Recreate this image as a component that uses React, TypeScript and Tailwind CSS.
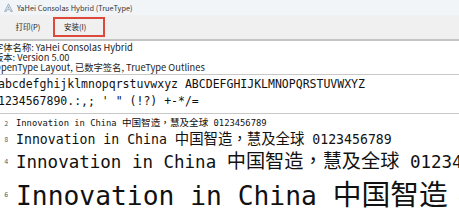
const mono = "font-['DejaVu_Sans_Mono','Liberation_Mono',monospace]";
const cjk = "font-['Noto_Sans_CJK_SC','Noto_Sans',sans-serif]";
const cjkTc = "font-['Noto_Sans_CJK_TC','Noto_Sans_CJK_SC',sans-serif]";

const samples = [
  { pt: "12", row: "h-[16px]", latin: "text-[8.8px]", han: "text-[9.6px]" },
  { pt: "18", row: "h-[16px]", latin: "text-[13.2px]", han: "text-[14.4px]" },
  { pt: "24", row: "h-[28px]", latin: "text-[17.5px]", han: "text-[19.2px]" },
  { pt: "36", row: "h-[38px]", latin: "text-[26.3px]", han: "text-[28.8px]" },
];

function FontIcon() {
  return (
    <svg width="9" height="9" viewBox="0 0 9 9" className="shrink-0">
      <path d="M4.5 0.8 L8.4 8.4 H6.6 L5.8 6.6 H3.2 L2.4 8.4 H0.6 Z" fill="#dbe4ee" stroke="#8a9bb0" strokeWidth="0.7" />
      <path d="M3.7 5.3 H5.3 L4.5 3.4 Z" fill="#8a9bb0" />
    </svg>
  );
}

export default function App() {
  return (
    <div className={`w-[459px] h-[213px] overflow-hidden bg-white text-[#111] ${cjk}`}>
      {/* Title bar */}
      <div className="h-[15px] bg-[#f2f5f8] flex items-center gap-[4px] pl-[4px]">
        <FontIcon />
        <span className="text-[7.4px] text-[#333] leading-none">YaHei Consolas Hybrid (TrueType)</span>
      </div>

      {/* Toolbar */}
      <div className="h-[26px] bg-[#f0f0f0] border-b-2 border-[#c4c4c4] flex items-center pl-[5px] gap-[2px]">
        <button className="w-[46px] h-[20px] text-[7.5px] text-[#222] text-center">打印(P)</button>
        <button className="w-[52px] h-[20px] text-[7.5px] text-[#222] text-left pl-[9px] border-2 border-[#dc4a3c]">安装(I)</button>
      </div>

      {/* Info */}
      <div className="ml-[-6px] pt-[1px] pb-[2px] border-b border-[#c8c8c8] text-[9.3px] leading-[10px] text-[#222]">
        <div>字体名称: YaHei Consolas Hybrid</div>
        <div>版本: Version 5.00</div>
        <div>OpenType Layout, 已数字签名, TrueType Outlines</div>
      </div>

      {/* Character set */}
      <div className={`ml-[-2px] pt-[1px] pb-[3px] border-b border-[#c8c8c8] text-[11.5px] leading-[17px] whitespace-pre ${mono}`}>
        <div>abcdefghijklmnopqrstuvwxyz ABCDEFGHIJKLMNOPQRSTUVWXYZ</div>
        <div>1234567890.:,; ' " (!?) +-*/=</div>
      </div>

      {/* Size samples */}
      <div className="pt-[1px]">
        {samples.map((s) => (
          <div key={s.pt} className={`${s.row} flex items-center whitespace-nowrap`}>
            <span className="ml-[4px] w-[4px] shrink-0 overflow-hidden flex justify-end text-[6.5px] text-[#555] leading-none">{s.pt}</span>
            <span className="ml-[8px] flex items-baseline leading-none">
              <span className={`${mono} ${s.latin} whitespace-pre`}>Innovation in China </span>
              <span className={`${cjk} ${s.han}`}>中国智造</span>
              <span className={`${cjkTc} ${s.han}`}>，</span>
              <span className={`${cjk} ${s.han}`}>慧及全球</span>
              <span className={`${mono} ${s.latin} whitespace-pre`}> 0123456789</span>
            </span>
          </div>
        ))}
      </div>
    </div>
  );
}
